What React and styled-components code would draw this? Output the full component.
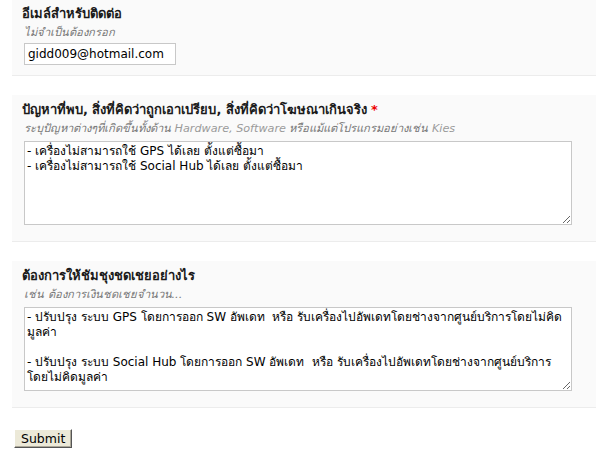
import React from 'react';
import styled, { createGlobalStyle } from 'styled-components';

const GlobalStyle = createGlobalStyle`
  body {
    margin: 0;
    background: #fff;
    font-family: "DejaVu Sans", "Liberation Sans", sans-serif;
    color: #000;
  }
`;

const Form = styled.form`
  display: flex;
  flex-direction: column;
  gap: 19px;
  padding-left: 12px;
`;

const Panel = styled.div`
  background: #fafafa;
  border-bottom: 1px solid #ececec;
  padding: ${p => p.$top || 6}px 12px ${p => p.$bottom || 16}px 10px;
  display: flex;
  flex-direction: column;
`;

const Title = styled.label`
  font-size: 13px;
  font-weight: bold;
  line-height: 18px;
  color: #1a1a1a;
`;

const Required = styled.span`
  color: #e00;
  margin-left: 4px;
`;

const Hint = styled.div`
  font-size: 11.2px;
  font-style: italic;
  line-height: 18px;
  color: #777;
  margin: 1px 0 0 2px;
`;

const Latin = styled.span`
  color: #9a9a9a;
`;

const Input = styled.input`
  box-sizing: border-box;
  width: 152px;
  height: 22px;
  margin: 1px 0 0 2px;
  padding: 0 3px;
  border: 1px solid #c8c8c8;
  background: #fff;
  font-family: "DejaVu Sans", "Liberation Sans", sans-serif;
  font-size: 12px;
  color: #000;
`;

const TextArea = styled.textarea`
  box-sizing: border-box;
  width: 548px;
  height: 84px;
  margin: 3px 0 0 2px;
  padding: 2px 2px;
  border: 1px solid #c8c8c8;
  background: #fff;
  font-family: "DejaVu Sans", "Liberation Sans", sans-serif;
  font-size: 12px;
  line-height: 15px;
  color: #000;
  resize: both;
`;

const SubmitButton = styled.button`
  align-self: flex-start;
  margin: 2px 0 0 2px;
  height: 19px;
  padding: 0 6px;
  background: #ece9d8;
  border: 1px solid;
  border-color: #fff #555 #555 #fff;
  box-shadow: inset -1px -1px 0 #aca899;
  font-family: "DejaVu Sans", "Liberation Sans", sans-serif;
  font-size: 12.5px;
  color: #000;
`;

const problems = '- เครื่องไม่สามารถใช้ GPS ได้เลย ตั้งแต่ซื้อมา\n- เครื่องไม่สามารถใช้ Social Hub ได้เลย ตั้งแต่ซื้อมา';
const remedy = '- ปรับปรุง ระบบ GPS โดยการออก SW อัพเดท  หรือ รับเครื่องไปอัพเดทโดยช่างจากศูนย์บริการโดยไม่คิดมูลค่า\n\n- ปรับปรุง ระบบ Social Hub โดยการออก SW อัพเดท  หรือ รับเครื่องไปอัพเดทโดยช่างจากศูนย์บริการโดยไม่คิดมูลค่า';

export default function App() {
  return (
    <>
      <GlobalStyle />
      <Form onSubmit={e => e.preventDefault()}>
        <Panel $top={5} $bottom={10}>
          <Title>อีเมล์สำหรับติดต่อ</Title>
          <Hint>ไม่จำเป็นต้องกรอก</Hint>
          <Input defaultValue="gidd009@hotmail.com" />
        </Panel>

        <Panel>
          <Title>
            ปัญหาที่พบ, สิ่งที่คิดว่าถูกเอาเปรียบ, สิ่งที่คิดว่าโฆษณาเกินจริง<Required>*</Required>
          </Title>
          <Hint>
            ระบุปัญหาต่างๆที่เกิดขึ้นทั้งด้าน <Latin>Hardware, Software</Latin> หรือแม้แต่โปรแกรมอย่างเช่น <Latin>Kies</Latin>
          </Hint>
          <TextArea defaultValue={problems} />
        </Panel>

        <Panel>
          <Title>ต้องการให้ชัมชุงชดเชยอย่างไร</Title>
          <Hint>เช่น ต้องการเงินชดเชยจำนวน...</Hint>
          <TextArea defaultValue={remedy} />
        </Panel>

        <SubmitButton type="submit">Submit</SubmitButton>
      </Form>
    </>
  );
}
